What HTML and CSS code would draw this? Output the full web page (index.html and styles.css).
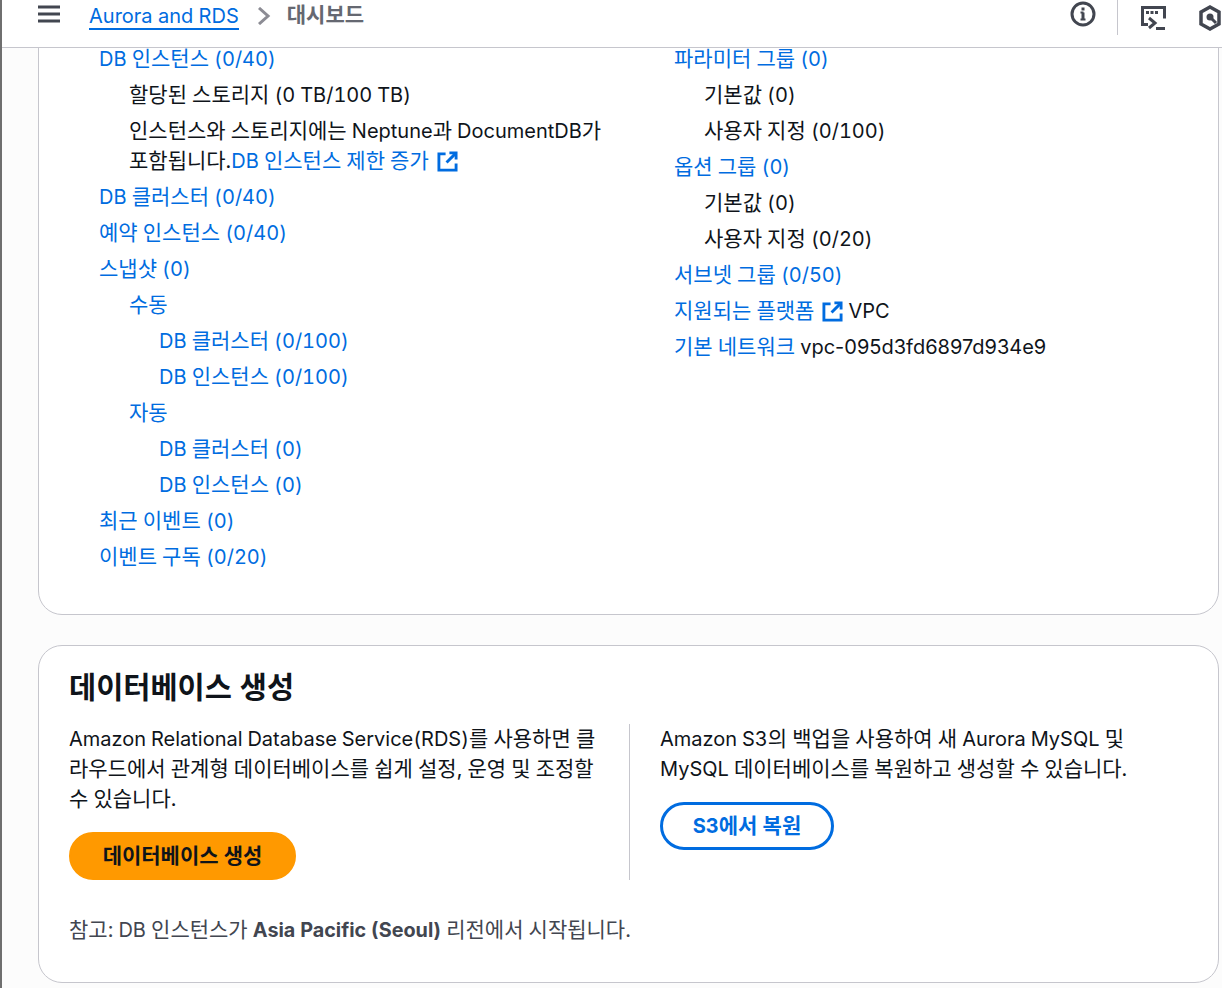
FILE: index.html
```html
<!DOCTYPE html>
<html lang="ko">
<head>
<meta charset="utf-8">
<title>대시보드</title>
<link rel="stylesheet" href="styles.css">
</head>
<body>
<header class="topbar">
  <svg class="icon-menu" width="22" height="18" viewBox="0 0 22 18"><path d="M0 2h22M0 9h22M0 16h22" stroke="#424650" stroke-width="3" fill="none"/></svg>
  <a class="crumb-link" href="#"><span class="lat">Aurora and RDS</span></a>
  <svg class="icon-chevron" width="14" height="18" viewBox="0 0 14 18"><path d="M2 1l9 8-9 8" stroke="#8c8c94" stroke-width="3" fill="none"/></svg>
  <span class="crumb-current">대시보드</span>
  <div class="topbar-actions">
    <svg class="icon-info" width="26" height="26" viewBox="0 0 26 26"><circle cx="13" cy="13" r="11" stroke="#424650" stroke-width="3" fill="none"/><path d="M13 11.500v7" stroke="#424650" stroke-width="3"/><path d="M10.500 18.500h5M10.500 11.500h3" stroke="#424650" stroke-width="2"/><rect x="11.500" y="6.500" width="3" height="3" fill="#424650"/></svg>
    <span class="topbar-divider"></span>
    <svg class="icon-shell" width="26" height="26" viewBox="0 0 26 26"><path d="M7 19.500H1.500V2.500h22v11" stroke="#424650" stroke-width="3" fill="none"/><path d="M5 7.500h3M9.500 7.500h3M14 7.500h3" stroke="#424650" stroke-width="3"/><path d="M8 13l6 5-6 5" stroke="#424650" stroke-width="3" fill="none"/><path d="M15 23.500h9" stroke="#424650" stroke-width="3"/></svg>
    <svg class="icon-hex" width="22" height="26" viewBox="0 0 22 26"><path d="M11 2l9 5v12l-9 5-9-5V7z" stroke="#424650" stroke-width="3.500" fill="none"/><circle cx="11" cy="12" r="3.500" fill="#424650"/><path d="M12 13l5 5" stroke="#424650" stroke-width="3"/></svg>
  </div>
</header>
<main class="content">
  <section class="card card-resources">
    <div class="two-col">
      <ul class="tree">
        <li><a href="#"><span class="lat">DB</span> 인스턴스 <span class="lat">(0/40)</span></a>
          <ul>
            <li>할당된 스토리지 <span class="lat">(0 TB/100 TB)</span></li>
            <li>인스턴스와 스토리지에는 <span class="lat">Neptune</span>과 <span class="lat">DocumentDB</span>가 포함됩니다.<a href="#"><span class="lat">DB</span> 인스턴스 제한 증가<svg class="icon-ext" width="21" height="21" viewBox="0 0 22 22"><path d="M9 3H2v17h18v-7" stroke="#006ce0" stroke-width="3" fill="none"/><path d="M13 2h7v7" stroke="#006ce0" stroke-width="3" fill="none"/><path d="M19 3l-9 9" stroke="#006ce0" stroke-width="3" fill="none"/></svg></a></li>
          </ul>
        </li>
        <li><a href="#"><span class="lat">DB</span> 클러스터 <span class="lat">(0/40)</span></a></li>
        <li><a href="#">예약 인스턴스 <span class="lat">(0/40)</span></a></li>
        <li><a href="#">스냅샷 <span class="lat">(0)</span></a>
          <ul>
            <li><a href="#">수동</a>
              <ul>
                <li><a href="#"><span class="lat">DB</span> 클러스터 <span class="lat">(0/100)</span></a></li>
                <li><a href="#"><span class="lat">DB</span> 인스턴스 <span class="lat">(0/100)</span></a></li>
              </ul>
            </li>
            <li><a href="#">자동</a>
              <ul>
                <li><a href="#"><span class="lat">DB</span> 클러스터 <span class="lat">(0)</span></a></li>
                <li><a href="#"><span class="lat">DB</span> 인스턴스 <span class="lat">(0)</span></a></li>
              </ul>
            </li>
          </ul>
        </li>
        <li><a href="#">최근 이벤트 <span class="lat">(0)</span></a></li>
        <li><a href="#">이벤트 구독 <span class="lat">(0/20)</span></a></li>
      </ul>
      <ul class="tree">
        <li><a href="#">파라미터 그룹 <span class="lat">(0)</span></a>
          <ul>
            <li>기본값 <span class="lat">(0)</span></li>
            <li>사용자 지정 <span class="lat">(0/100)</span></li>
          </ul>
        </li>
        <li><a href="#">옵션 그룹 <span class="lat">(0)</span></a>
          <ul>
            <li>기본값 <span class="lat">(0)</span></li>
            <li>사용자 지정 <span class="lat">(0/20)</span></li>
          </ul>
        </li>
        <li><a href="#">서브넷 그룹 <span class="lat">(0/50)</span></a></li>
        <li><a href="#">지원되는 플랫폼<svg class="icon-ext" width="21" height="21" viewBox="0 0 22 22"><path d="M9 3H2v17h18v-7" stroke="#006ce0" stroke-width="3" fill="none"/><path d="M13 2h7v7" stroke="#006ce0" stroke-width="3" fill="none"/><path d="M19 3l-9 9" stroke="#006ce0" stroke-width="3" fill="none"/></svg></a> <span class="lat">VPC</span></li>
        <li><a href="#">기본 네트워크</a> <span class="lat vpc-id">vpc-095d3fd6897d934e9</span></li>
      </ul>
    </div>
  </section>
  <section class="card card-create">
    <h2 class="card-title">데이터베이스 생성</h2>
    <div class="create-cols">
      <div class="create-col">
        <p><span class="lat">Amazon Relational Database Service(RDS)</span>를 사용하면 클라우드에서 관계형 데이터베이스를 쉽게 설정, 운영 및 조정할 수 있습니다.</p>
        <a class="btn btn-primary" href="#">데이터베이스 생성</a>
      </div>
      <div class="create-col create-col-right">
        <p><span class="lat">Amazon S3</span>의 백업을 사용하여 새 <span class="lat">Aurora MySQL</span> 및 <span class="lat">MySQL</span> 데이터베이스를 복원하고 생성할 수 있습니다.</p>
        <a class="btn btn-outline" href="#"><span class="lat">S3</span>에서 복원</a>
      </div>
    </div>
    <p class="note">참고: <span class="lat">DB</span> 인스턴스가 <strong class="lat note-strong">Asia Pacific (Seoul)</strong> 리전에서 시작됩니다.</p>
  </section>
</main>
</body>
</html>
```

FILE: styles.css
```css
* { box-sizing: border-box; }
html, body { margin: 0; height: 988px; overflow: hidden; }
body {
  border-left: 2px solid #6f6f6f;
  background: #fcfcfc;
  color: #0f141a;
  font-family: "Inter", "Noto Sans CJK KR", sans-serif;
  font-size: 21px;
  line-height: 30px;
  word-spacing: -0.5px;
  font-variant-numeric: tabular-nums;
}
.lat { font-size: 20px; line-height: 1; }
.vpc-id { font-variant-numeric: normal; }
a { color: #006ce0; text-decoration: none; }
ul { list-style: none; margin: 0; padding: 0; }
p { margin: 0; }

.topbar {
  position: relative;
  z-index: 1;
  display: flex;
  align-items: flex-start;
  height: 48px;
  background: #fff;
  border-bottom: 1px solid #c6c6cd;
  padding-left: 36px;
  padding-right: 1px;
}
.icon-menu { margin-top: 5px; flex: none; }
.crumb-link {
  margin-left: 29px;
  margin-top: 2px;
  height: 28px;
  line-height: 28px;
  border-bottom: 2px solid #006ce0;
  word-spacing: 0;
}
.icon-chevron { margin-left: 18px; margin-top: 7px; flex: none; }
.crumb-current { margin-left: 16px; color: #656871; font-weight: 700; line-height: 30px; }
.topbar-actions { margin-left: auto; display: flex; align-items: flex-start; }
.icon-info { margin-top: 1px; flex: none; }
.topbar-divider { width: 1px; height: 35px; background: #c6c6cd; margin-left: 21px; margin-right: 23px; }
.icon-shell { margin-top: 5px; flex: none; }
.icon-hex { margin-top: 5px; margin-left: 32px; flex: none; }

.content { margin-top: -5px; padding-left: 36px; }
.card {
  width: 1181px;
  background: #fff;
  border: 1px solid #c6c6cd;
  border-radius: 24px;
  padding-left: 30px;
  padding-right: 29px;
}
.card-resources { height: 572px; padding-top: 0; border-top-left-radius: 0; border-top-right-radius: 0; }
.two-col { display: grid; grid-template-columns: 545px 545px; column-gap: 30px; }
.tree > li { padding-left: 30px; }
.tree li + li { margin-top: 6px; }
.tree ul { margin-top: 6px; padding-left: 30px; }
.icon-ext { vertical-align: -4px; margin-left: 8px; }

.card-create { margin-top: 30px; height: 338px; padding-top: 21px; }
.card-title { margin: 0; font-size: 29.500px; line-height: 40px; font-weight: 700; word-spacing: 0; }
.create-cols { display: grid; grid-template-columns: 560px 560px; margin-top: 17px; }
.create-col { padding-right: 25px; height: 156px; }
.create-col-right { border-left: 1px solid #c6c6cd; padding-left: 30px; padding-right: 0; }
.btn {
  display: inline-block;
  height: 48px;
  margin-top: 18px;
  border-radius: 24px;
  font-weight: 700;
  line-height: 44px;
  text-align: center;
}
.btn-primary { width: 227px; background: #ff9900; color: #0f141a; border: 2px solid #ff9900; }
.btn-outline { width: 174px; background: #fff; color: #006ce0; border: 3px solid #006ce0; line-height: 42px; }
.note { margin-top: 35px; color: #424650; }
.note-strong { font-size: 19.800px; font-weight: 700; }
```
